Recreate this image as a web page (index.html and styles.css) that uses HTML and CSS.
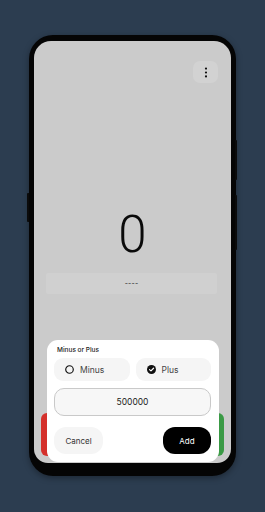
FILE: index.html
```html
<!DOCTYPE html>
<html lang="en">
<head>
  <meta charset="UTF-8" />
  <meta name="viewport" content="width=device-width, initial-scale=1.0" />
  <title>Counter</title>
  <link rel="stylesheet" href="styles.css">
</head>
<body>

  <div class="phone">
    <span class="side-key key-left"></span>
    <span class="side-key key-right-a"></span>
    <span class="side-key key-right-b"></span>

    <div class="screen">
      <div class="topbar">
        <button class="menu-btn" aria-label="More">
          <svg width="4" height="11" viewBox="0 0 4 11">
            <circle cx="2" cy="1.6" r="1.1" fill="#111"/>
            <circle cx="2" cy="5.5" r="1.1" fill="#111"/>
            <circle cx="2" cy="9.4" r="1.1" fill="#111"/>
          </svg>
        </button>
      </div>

      <div class="counter">0</div>
      <div class="last-change">----</div>

      <div class="sheet-wrap">
        <div class="swipe-bg"></div>
        <div class="sheet">
          <div class="sheet-title">Minus or Plus</div>

          <div class="choices">
            <div class="choice">
              <svg width="9" height="9" viewBox="0 0 10 10">
                <circle cx="5" cy="5" r="4.2" fill="none" stroke="#111" stroke-width="1.3"/>
              </svg>
              <span>Minus</span>
            </div>
            <div class="choice">
              <svg width="9" height="9" viewBox="0 0 10 10">
                <circle cx="5" cy="5" r="5" fill="#111"/>
                <path d="M2.8 5.1 L4.4 6.6 L7.3 3.6" fill="none" stroke="#fff" stroke-width="1.3" stroke-linecap="round" stroke-linejoin="round"/>
              </svg>
              <span>Plus</span>
            </div>
          </div>

          <div class="amount">500000</div>

          <div class="actions">
            <button class="btn btn-cancel">Cancel</button>
            <button class="btn btn-add">Add</button>
          </div>
        </div>
      </div>
    </div>
  </div>

</body>
</html>
```

FILE: styles.css
```css
* { box-sizing: border-box; }

body {
  margin: 0;
  width: 265px;
  height: 512px;
  background: #2c3d50;
  font-family: Inter, "Noto Sans", sans-serif;
  overflow: hidden;
}

.phone {
  position: relative;
  width: 207px;
  height: 441px;
  margin: 35px 0 0 29px;
  padding: 6px 5px 13px 5px;
  background: #050505;
  border-radius: 24px;
  box-shadow: 0 2px 6px rgba(0, 0, 0, 0.35);
}

.side-key {
  position: absolute;
  width: 2px;
  background: #0b0b0b;
}

.key-left { left: -2px; top: 158px; height: 29px; border-radius: 1px 0 0 1px; }
.key-right-a { right: -1px; top: 105px; height: 40px; border-radius: 0 1px 1px 0; }
.key-right-b { right: -1px; top: 160px; height: 55px; border-radius: 0 1px 1px 0; }

.screen {
  height: 100%;
  background: #cbcbcb;
  border-radius: 17px 17px 14px 14px;
  display: flex;
  flex-direction: column;
  padding-bottom: 1px;
  overflow: hidden;
}

.topbar {
  display: flex;
  justify-content: flex-end;
  padding: 20px 13px 0 0;
}

.menu-btn {
  width: 25px;
  height: 22px;
  border: none;
  padding: 0;
  background: #d2d2d2;
  border-radius: 7px;
  display: flex;
  align-items: center;
  justify-content: center;
}

.counter {
  margin-top: 126px;
  text-align: center;
  font-family: Roboto, sans-serif;
  font-weight: 300;
  font-size: 51px;
  line-height: 51px;
  color: #0a0a0a;
}

.last-change {
  margin: 13px 14px 0 12px;
  height: 21px;
  background: #d0d0d0;
  border-radius: 2px;
  display: flex;
  align-items: center;
  justify-content: center;
  font-size: 7px;
  color: #222;
  letter-spacing: 0.2px;
}

/* bottom sheet */
.sheet-wrap {
  position: relative;
  margin: auto 12px 0 13px;
}

.swipe-bg {
  position: absolute;
  left: -6px;
  right: -5px;
  top: 73px;
  height: 43px;
  border-radius: 6px;
  background: linear-gradient(90deg, #d4302b 0 50%, #3a9a45 50% 100%);
}

.sheet {
  position: relative;
  height: 122px;
  background: #fff;
  border-radius: 11px;
  padding: 5px 8px 8px 7px;
  display: flex;
  flex-direction: column;
}

.sheet-title {
  padding-left: 3px;
  height: 10px;
  line-height: 10px;
  font-size: 6.5px;
  font-weight: 500;
  color: #222;
  margin-bottom: 3px;
}

.choices {
  display: flex;
  gap: 6px;
}

.choice {
  flex: 1;
  height: 23px;
  background: #f5f5f5;
  border-radius: 9px;
  display: flex;
  align-items: center;
  gap: 6px;
  padding-left: 11px;
  font-size: 8.5px;
  color: #444;
}

.amount {
  margin-top: 7px;
  height: 28px;
  background: #f7f7f7;
  border: 1px solid #c9c9c9;
  border-radius: 10px;
  display: flex;
  align-items: center;
  justify-content: center;
  font-size: 8.5px;
  color: #222;
}

.actions {
  margin-top: 11px;
  display: flex;
  justify-content: space-between;
}

.btn {
  height: 27px;
  border: none;
  border-radius: 12px;
  font-family: Inter, "Noto Sans", sans-serif;
  font-size: 8px;
  padding: 0;
}

.btn-cancel {
  width: 49px;
  background: #f5f5f5;
  color: #333;
}

.btn-add {
  width: 48px;
  background: #000;
  color: #fff;
}
```
